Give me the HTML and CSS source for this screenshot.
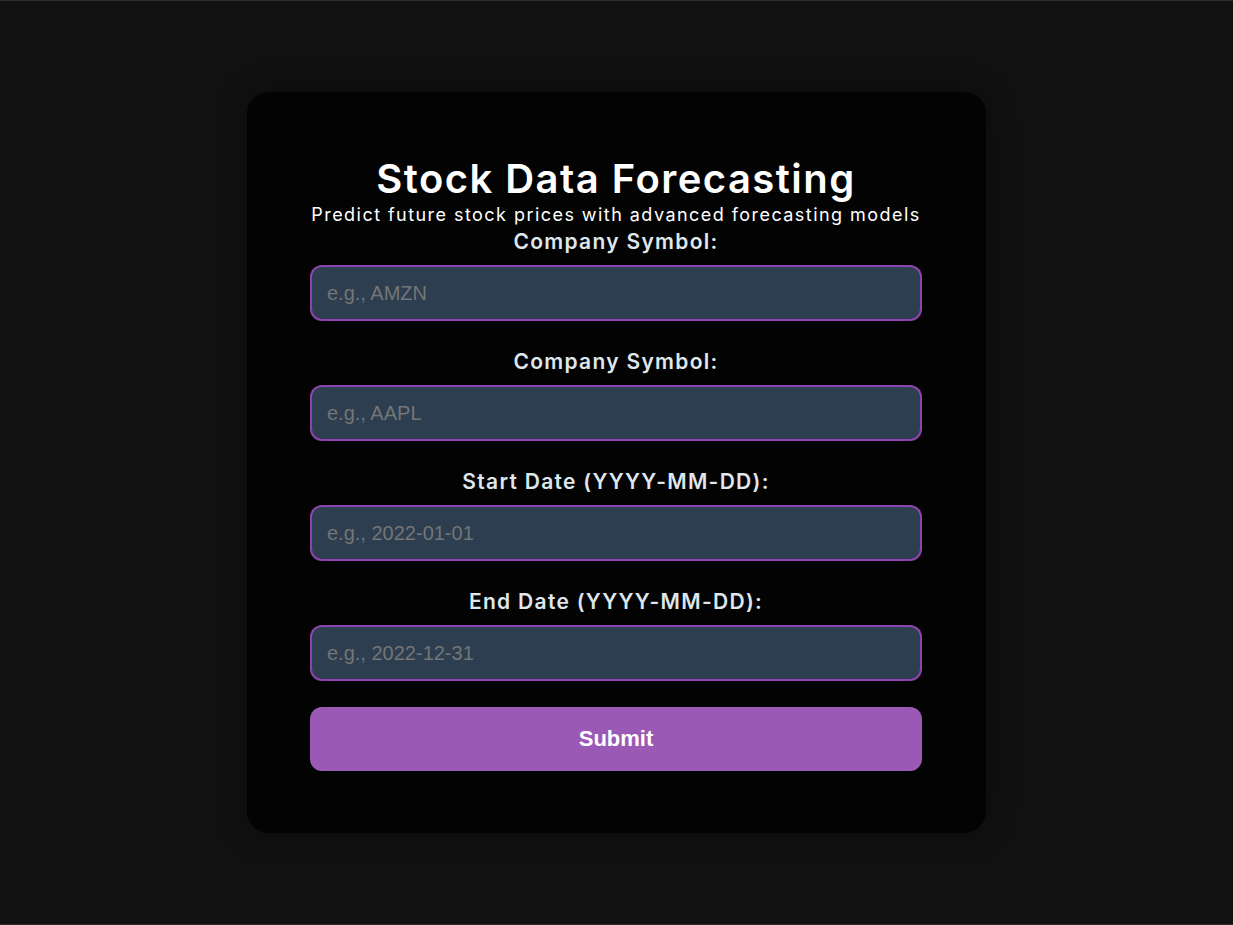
FILE: index.html
```html
<!DOCTYPE html>
<html lang="en">
<head>
<meta charset="utf-8">
<title>Stock Data Forecasting</title>
<link rel="stylesheet" href="styles.css">
</head>
<body>
<div class="page">
  <main class="card">
    <h1 class="title">Stock Data Forecasting</h1>
    <p class="subtitle">Predict future stock prices with advanced forecasting models</p>
    <form class="form">
      <label class="label" for="s1">Company Symbol:</label>
      <input class="field" id="s1" type="text" placeholder="e.g., AMZN">
      <label class="label" for="s2">Company Symbol:</label>
      <input class="field" id="s2" type="text" placeholder="e.g., AAPL">
      <label class="label" for="d1">Start Date (YYYY-MM-DD):</label>
      <input class="field" id="d1" type="text" placeholder="e.g., 2022-01-01">
      <label class="label" for="d2">End Date (YYYY-MM-DD):</label>
      <input class="field" id="d2" type="text" placeholder="e.g., 2022-12-31">
      <button class="submit" type="button">Submit</button>
    </form>
  </main>
</div>
</body>
</html>
```

FILE: styles.css
```css
* { box-sizing: border-box; }
html, body { margin: 0; padding: 0; }
body {
  background: #111111;
  font-family: Inter, "Open Sans", sans-serif;
}
.page {
  height: 925px;
  border-top: 1px solid #2c2c2c;
  border-bottom: 1px solid #2c2c2c;
  display: flex;
  justify-content: center;
  align-items: flex-start;
  padding-top: 91px;
}
.card {
  width: 739px;
  height: 741px;
  background: #030303;
  border-radius: 22px;
  box-shadow: 0 0 30px rgba(0,0,0,0.35);
  padding: 62px 64px 0 63px;
  display: flex;
  flex-direction: column;
  align-items: stretch;
}
.title {
  margin: 0;
  text-align: center;
  color: #ffffff;
  font-size: 40px;
  font-weight: 600;
  line-height: 50px;
  letter-spacing: 1.45px;
}
.subtitle {
  margin: 0 -20px;
  text-align: center;
  white-space: nowrap;
  color: #ffffff;
  font-size: 18px;
  font-weight: 400;
  line-height: 22px;
  letter-spacing: 1.45px;
}
.form {
  display: flex;
  flex-direction: column;
}
.label {
  display: block;
  text-align: center;
  color: #dfe6ec;
  font-size: 21px;
  font-weight: 600;
  line-height: 24px;
  letter-spacing: 1.3px;
  margin-top: 4px;
  margin-bottom: 11px;
}
.field + .label { margin-top: 29px; }
.field {
  height: 56px;
  width: 100%;
  background: #2c3e50;
  border: 2px solid #8e44ad;
  border-radius: 12px;
  padding: 0 15px;
  font-family: "Liberation Sans", Arial, sans-serif;
  font-size: 20px;
  color: #ffffff;
  outline: none;
}
.field::placeholder { color: #757575; }
.submit {
  margin-top: 26px;
  height: 64px;
  width: 100%;
  background: #9b59b6;
  border: none;
  border-radius: 12px;
  color: #ffffff;
  font-family: "Liberation Sans", Arial, sans-serif;
  font-size: 22px;
  font-weight: 700;
}
```
